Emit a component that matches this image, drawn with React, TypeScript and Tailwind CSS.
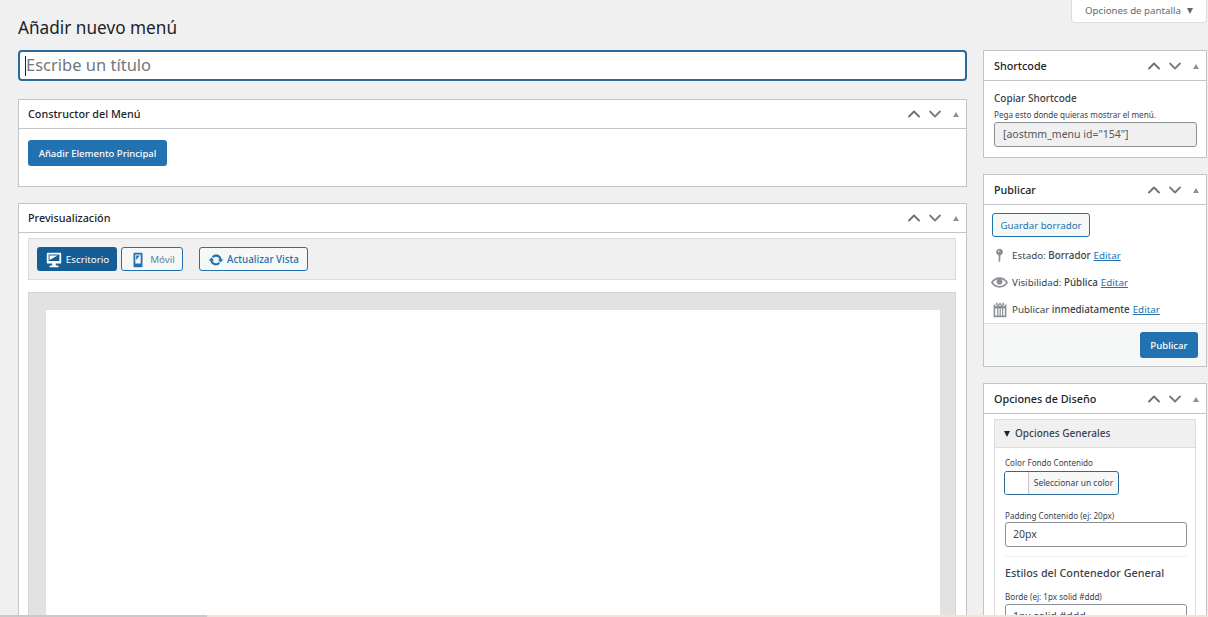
import { ChevronUp, ChevronDown } from 'lucide-react'

const FONT = "font-['Noto_Sans',sans-serif]"

function BoxControls() {
  return (
    <div className="flex items-center shrink-0">
      <ChevronUp size={20} strokeWidth={2.2} className="text-[#6b7075]" />
      <ChevronDown size={20} strokeWidth={2.2} className="ml-[1px] text-[#787c82]" />
      <span className="ml-[8px] mr-[7px] w-0 h-0 border-x-[3.5px] border-x-transparent border-b-[5px] border-b-[#8c8f94]" />
    </div>
  )
}

function Postbox({ title, side, className, children }: { title: string; side?: boolean; className?: string; children: React.ReactNode }) {
  return (
    <section className={`bg-white border border-[#c3c4c7] ${className ?? ''}`}>
      <div className={`flex items-center justify-between border-b border-[#c3c4c7] ${side ? 'h-[30px] pl-[10px] pt-px' : 'h-[29px] pl-[9px]'}`}>
        <h2 className="text-[10.8px] font-medium text-[#1d2327]">{title}</h2>
        <BoxControls />
      </div>
      {children}
    </section>
  )
}

function DesktopIcon() {
  return (
    <svg width="18" height="18" viewBox="0 0 20 20" fill="currentColor">
      <path d="M3 2h14c.55 0 1 .45 1 1v10c0 .55-.45 1-1 1h-5v2h2c.55 0 1 .45 1 1v1H5v-1c0-.55.45-1 1-1h2v-2H3c-.55 0-1-.45-1-1V3c0-.55.45-1 1-1zm13 9V4H4v7h12zM5 5h9L5 10V5z" />
    </svg>
  )
}

function PhoneIcon() {
  return (
    <svg width="18" height="18" viewBox="0 0 20 20" fill="currentColor">
      <path d="M6 2h8c.55 0 1 .45 1 1v14c0 .55-.45 1-1 1H6c-.55 0-1-.45-1-1V3c0-.55.45-1 1-1zm7 12V4H7v10h6zM8 5h4l-4 5V5z" />
    </svg>
  )
}

function UpdateIcon() {
  return (
    <svg width="16" height="16" viewBox="0 0 20 20" fill="currentColor">
      <path d="M10.2 3.28c3.53 0 6.43 2.61 6.92 6h2.08l-3.5 4-3.5-4h2.32c-.45-1.97-2.21-3.44-4.32-3.44-1.45 0-2.73.71-3.54 1.78L4.95 5.66C6.23 4.2 8.11 3.28 10.2 3.28zm-.4 13.44c-3.52 0-6.43-2.61-6.92-6H.8l3.5-4c1.17 1.33 2.33 2.67 3.5 4H5.48c.45 1.97 2.21 3.44 4.32 3.44 1.45 0 2.73-.71 3.54-1.78l1.71 1.95c-1.28 1.46-3.15 2.38-5.25 2.38z" />
    </svg>
  )
}

function PinIcon() {
  return (
    <svg width="17" height="17" viewBox="0 0 20 20" fill="#8c8f94">
      <path d="M14 6c0 1.86-1.28 3.41-3 3.86V16c0 1-2 2-2 2V9.86c-1.72-.45-3-2-3-3.86 0-2.21 1.79-4 4-4s4 1.79 4 4zM8 5c0 .55.45 1 1 1s1-.45 1-1-.45-1-1-1-1 .45-1 1z" />
    </svg>
  )
}

function EyeIcon() {
  return (
    <svg width="17" height="17" viewBox="0 0 20 20" fill="#8c8f94">
      <path d="M19.7 9.4C17.7 6 14 3.9 10 3.9S2.3 6 .3 9.4L0 10l.3.6c2 3.4 5.7 5.5 9.7 5.5s7.7-2.1 9.7-5.5l.3-.6-.3-.6zM10 14.1c-3.1 0-6-1.6-7.7-4.1C3.6 8 5.7 6.6 8 6.1c-.9.6-1.5 1.7-1.5 2.9 0 1.9 1.6 3.5 3.5 3.5s3.5-1.6 3.5-3.5c0-1.2-.6-2.3-1.5-2.9 2.3.5 4.4 1.9 5.7 3.9-1.7 2.500-4.600 4.100-7.700 4.100z" />
    </svg>
  )
}

function CalendarIcon() {
  return (
    <svg width="16" height="16" viewBox="0 0 20 20" fill="#8c8f94">
      <path fillRule="evenodd" d="M5 1h2v3H5V1zm4 0h2v3H9V1zm4 0h2v3h-2V1zM2 3h2v2h3V3h2v2h2V3h2v2h3V3h2v16H2V3zm2 5v9h2.5V8H4zm4 0v9h1.5V8H8zm3 0v9h1.5V8H11zm3 0v9h2V8h-2z" />
    </svg>
  )
}

function MetaRow({ icon, children }: { icon: React.ReactNode; children: React.ReactNode }) {
  return (
    <div className="flex items-center h-[27px] pl-[7px] text-[9.8px] text-[#3c434a]">
      <span className="w-[21px] pr-[4px] flex justify-center shrink-0">{icon}</span>
      <span className="whitespace-nowrap pt-px">{children}</span>
    </div>
  )
}

function Edit() {
  return <a className="text-[#2271b1] underline ml-[3px]">Editar</a>
}

export default function App() {
  return (
    <div className={`${FONT} relative h-[617px] w-[1208px] overflow-hidden bg-[#f0f0f1] text-[#3c434a]`}>
      {/* Opciones de pantalla */}
      <div className="absolute top-0 right-[1px] w-[136px] h-[23px] flex items-center gap-[6px] pl-[13px] bg-white border border-t-0 border-[#dcdcde] rounded-b-[4px] text-[9.7px] text-[#646970]">
        Opciones de pantalla
        <span className="w-0 h-0 border-x-[3.5px] border-x-transparent border-t-[6px] border-t-[#646970]" />
      </div>

      <div className="flex pl-[18px] gap-[16px]">
        {/* Main column */}
        <div className="w-[949px] shrink-0">
          <h1 className="text-[17.2px] leading-[24px] mt-[16px] text-[#1d2327]">Añadir nuevo menú</h1>
          <div className="mt-[10px] h-[31px] flex items-center bg-white border-2 border-[#2c6a98] rounded-[4px] pl-[5px]">
            <span className="w-px h-[20px] bg-[#1d2327]" />
            <span className="text-[16.5px] text-[#72777c]">Escribe un título</span>
          </div>

          <Postbox title="Constructor del Menú" className="mt-[18px] h-[88px]">
            <div className="pl-[9px] pt-[11px]">
              <button className="block h-[26px] w-[139px] pt-[2px] bg-[#2271b1] text-white text-[9.5px] font-medium rounded-[3px]">
                Añadir Elemento Principal
              </button>
            </div>
          </Postbox>

          <Postbox title="Previsualización" className="mt-[16px] h-[500px]">
            <div className="pl-[9px] pr-[10px] pt-[5px]">
              <div className="h-[42px] flex items-center bg-[#f0f0f1] border border-[#dcdcde] pl-[8px] text-[9.8px]">
                <button className="h-[24px] w-[80px] pt-[2px] flex items-center justify-center gap-[3px] bg-[#135e96] text-white rounded-[3px]">
                  <DesktopIcon />
                  Escritorio
                </button>
                <button className="h-[24px] w-[62px] ml-[4px] pt-[2px] flex items-center justify-center gap-[3px] bg-[#f6f7f7] border border-[#2271b1] text-[#5c84a3] rounded-[3px]">
                  <span className="text-[#2271b1]"><PhoneIcon /></span>
                  Móvil
                </button>
                <button className="h-[24px] w-[109px] ml-[16px] pt-[2px] flex items-center justify-center gap-[3px] bg-[#f6f7f7] border border-[#2271b1] text-[#2271b1] font-medium rounded-[3px]">
                  <UpdateIcon />
                  Actualizar Vista
                </button>
              </div>
              <div className="mt-[12px] h-[400px] bg-[#e2e2e2] border border-[#d3d3d3] pl-[17px] pr-[15px] pt-[17px]">
                <div className="h-full bg-white" />
              </div>
            </div>
          </Postbox>
        </div>

        {/* Sidebar */}
        <div className="w-[224px] shrink-0 pt-[50px]">
          <Postbox side title="Shortcode">
            <div className="pl-[10px] pr-[9px] pt-[10px] pb-[10px]">
              <p className="text-[10px] leading-[14px] font-medium text-[#3c434a]">Copiar Shortcode</p>
              <p className="text-[8.1px] leading-[13px] mt-[3px] text-[#3c434a]">Pega esto donde quieras mostrar el menú.</p>
              <div className="h-[25px] mt-[1px] flex items-center bg-[#f0f0f1] border border-[#8c8f94] rounded-[3px] pl-[8px] text-[10.5px] text-[#50575e]">
                [aostmm_menu id="154"]
              </div>
            </div>
          </Postbox>

          <Postbox side title="Publicar" className="mt-[16px]">
            <div className="pt-[8px]">
              <button className="block ml-[8px] h-[24px] w-[98px] pt-[2px] bg-[#f6f7f7] border border-[#2271b1] text-[#2271b1] text-[9.7px] rounded-[3px]">
                Guardar borrador
              </button>
              <div className="mt-[5px]">
                <MetaRow icon={<PinIcon />}>Estado: <span className="font-medium">Borrador</span><Edit /></MetaRow>
                <MetaRow icon={<EyeIcon />}>Visibilidad: <span className="font-medium">Pública</span><Edit /></MetaRow>
                <MetaRow icon={<CalendarIcon />}>Publicar <span className="font-medium">inmediatamente</span><Edit /></MetaRow>
              </div>
              <div className="h-[43px] flex items-center justify-end bg-[#f6f7f7] border-t border-[#dcdcde] pr-[8px]">
                <button className="h-[26px] w-[58px] pt-[2px] bg-[#2271b1] text-white text-[9.6px] font-medium rounded-[3px]">
                  Publicar
                </button>
              </div>
            </div>
          </Postbox>

          <Postbox side title="Opciones de Diseño" className="mt-[16px] h-[300px]">
            <div className="mx-[10px] mt-[5px] border border-[#dcdcde]">
              <div className="h-[28px] flex items-center gap-[5px] pl-[9px] bg-[#f0f0f1] border-b border-[#dcdcde] text-[10px] font-medium text-[#3c434a]">
                <span className="w-0 h-0 border-x-[3.5px] border-x-transparent border-t-[6px] border-t-[#1d2327]" />
                Opciones Generales
              </div>
              <div className="pl-[9px] pr-[8px] pt-[8px]">
                <p className="ml-px text-[8.1px] leading-[13px] text-[#3c434a]">Color Fondo Contenido</p>
                <div className="mt-[2px] w-[115px] h-[24px] flex bg-[#f6f7f7] border border-[#2c6a98] rounded-[3px] overflow-hidden">
                  <span className="w-[24px] bg-white border-r border-[#c3c4c7]" />
                  <span className="flex-1 flex items-center justify-center text-[8.4px] text-[#3c434a] whitespace-nowrap">Seleccionar un color</span>
                </div>
                <p className="ml-px mt-[14px] text-[8.1px] leading-[13px] text-[#3c434a]">Padding Contenido (ej: 20px)</p>
                <div className="ml-px h-[25px] flex items-center bg-white border border-[#8c8f94] rounded-[3px] pl-[7px] text-[10.5px] text-[#3c434a]">20px</div>
                <div className="mt-[9px] ml-px border-t border-[#f0f0f1]" />
                <p className="ml-px mt-[8px] text-[10.8px] leading-[16px] font-medium text-[#3c434a]">Estilos del Contenedor General</p>
                <p className="ml-px mt-[9px] text-[8.1px] leading-[13px] text-[#3c434a]">Borde (ej: 1px solid #ddd)</p>
                <div className="mt-[1px] ml-px h-[25px] flex items-center bg-white border border-[#8c8f94] rounded-[3px] pl-[7px] text-[10.5px] text-[#3c434a]">1px solid #ddd</div>
              </div>
            </div>
          </Postbox>
        </div>
      </div>

      {/* Bottom edge of the capture */}
      <div className="absolute inset-x-0 bottom-0 h-[2px] flex">
        <div className="w-[207px] bg-[#c9c9c9]" />
        <div className="flex-1 bg-[#eee4dc]" />
      </div>
    </div>
  )
}
